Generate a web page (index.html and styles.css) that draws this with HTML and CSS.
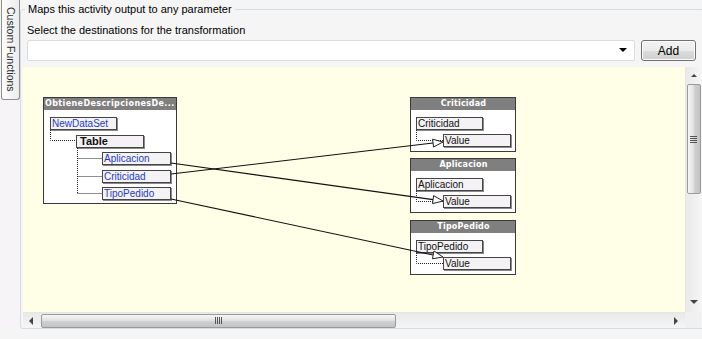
FILE: index.html
```html
<!DOCTYPE html>
<html lang="en">
<head>
    <meta charset="UTF-8">
    <title>Transformation mapping</title>
    <link rel="stylesheet" href="styles.css">
</head>
<body>
    <div class="window">
        <!-- Collapsed side panel -->
        <aside class="side">
            <div class="side-tab">Custom Functions</div>
        </aside>

        <fieldset class="mapping">
            <legend>Maps this activity output to any parameter</legend>
            <div class="dest-label">Select the destinations for the transformation</div>
            <div class="dest-row">
                <div class="combo"><span class="combo-arrow"></span></div>
                <button class="btn-add" type="button">Add</button>
            </div>

            <div class="viewer">
                <div class="canvas">
                    <!-- Source schema -->
                    <div class="node node-source">
                        <div class="node-title">ObtieneDescripcionesDe...</div>
                        <div class="node-body">
                            <div class="item lvl-0">NewDataSet</div>
                            <div class="item lvl-1 item-table">Table</div>
                            <div class="item lvl-2">Aplicacion</div>
                            <div class="item lvl-2">Criticidad</div>
                            <div class="item lvl-2">TipoPedido</div>
                        </div>
                    </div>

                    <!-- Destinations -->
                    <div class="node node-dest dest-1">
                        <div class="node-title center">Criticidad</div>
                        <div class="node-body">
                            <div class="item lvl-0 item-dest">Criticidad</div>
                            <div class="item lvl-1 item-dest">Value</div>
                        </div>
                    </div>
                    <div class="node node-dest dest-2">
                        <div class="node-title center">Aplicacion</div>
                        <div class="node-body">
                            <div class="item lvl-0 item-dest">Aplicacion</div>
                            <div class="item lvl-1 item-dest">Value</div>
                        </div>
                    </div>
                    <div class="node node-dest dest-3">
                        <div class="node-title center">TipoPedido</div>
                        <div class="node-body">
                            <div class="item lvl-0 item-dest">TipoPedido</div>
                            <div class="item lvl-1 item-dest">Value</div>
                        </div>
                    </div>

                    <!-- Tree connectors and mappings -->
                    <svg class="links" width="662" height="245" viewBox="23 67 662 245">
                        <g class="tree">
                            <path d="M50.5 130 V140.5 H76"/>
                            <path d="M77.5 148 V193.5 M77.5 158.5 H102 M77.5 176.5 H102 M77.5 193.5 H102"/>
                            <path d="M416.5 130 V140.5 H443"/>
                            <path d="M416.5 191 V201.5 H443"/>
                            <path d="M416.5 253 V263.5 H443"/>
                        </g>
                        <g class="map">
                            <line x1="171" y1="174" x2="433" y2="143"/>
                            <polygon points="443,142 433.5,147 432.6,139.2"/>
                            <line x1="171" y1="163" x2="433" y2="199.6"/>
                            <polygon points="443,201 432.5,203.6 433.6,195.6"/>
                            <line x1="171" y1="199" x2="433" y2="255"/>
                            <polygon points="443,257 432.4,258.8 434,251"/>
                        </g>
                    </svg>
                </div>

                <div class="vscroll">
                    <span class="arrow arrow-up"></span>
                    <div class="vthumb"><span class="grip-h"></span></div>
                    <span class="arrow arrow-down"></span>
                </div>
                <div class="hscroll">
                    <span class="arrow arrow-left"></span>
                    <div class="hthumb"><span class="grip-v"></span></div>
                    <span class="arrow arrow-right"></span>
                </div>
                <div class="corner"></div>
            </div>
        </fieldset>
    </div>
</body>
</html>
```

FILE: styles.css
```css
* {
    box-sizing: border-box;
}

html, body {
    margin: 0;
    padding: 0;
}

body {
    background-color: #f5f5f5;
    font-family: "Liberation Sans", Arial, sans-serif;
    font-size: 11px;
    color: #000;
    overflow: hidden;
}

.window {
    display: flex;
    align-items: flex-start;
    width: 704px;
    height: 339px;
}

/* Side panel */
.side {
    width: 20px;
    height: 329px;
    flex-shrink: 0;
    background-color: #f7f4f8;
}

.side-tab {
    width: 19px;
    height: 101px;
    margin: -1px 0 0 1px;
    padding-top: 8px;
    border: 1px solid #8e8f8f;
    border-top: none;
    border-radius: 0 0 3px 3px;
    background: linear-gradient(to right, #fdfdfd, #ececec);
    writing-mode: vertical-rl;
    line-height: 17px;
    font-size: 10.5px;
    color: #2b2b2b;
}

/* Group box */
.mapping {
    width: 684px;
    min-width: 0;
    margin: 2px 0 0 0;
    padding: 7px 2px 0 2px;
    border: 1px solid #d3dde5;
    border-radius: 3px;
}

.mapping legend {
    margin-left: 2px;
    padding: 0 3px;
    line-height: 14px;
    color: #000;
}

.dest-label {
    margin-left: 4px;
    line-height: 14px;
}

.dest-row {
    display: flex;
    gap: 6px;
    margin: 3px 0 6px 4px;
}

.combo {
    position: relative;
    width: 608px;
    height: 21px;
    background-color: #fff;
    border: 1px solid #dcdcdc;
    border-radius: 2px;
}

.combo-arrow {
    position: absolute;
    right: 7px;
    top: 7px;
    border-left: 4px solid transparent;
    border-right: 4px solid transparent;
    border-top: 4px solid #000;
}

.btn-add {
    width: 55px;
    height: 21px;
    padding: 0;
    font-family: inherit;
    font-size: 12px;
    color: #000;
    border: 1px solid #707070;
    border-radius: 3px;
    background: linear-gradient(#f3f3f3 0%, #ebebeb 50%, #dddddd 50%, #cfcfcf 100%);
    box-shadow: inset 0 0 0 1px #fcfcfc;
}

/* Designer surface */
.viewer {
    display: grid;
    grid-template-columns: 662px 16px;
    grid-template-rows: 245px 16px;
}

.canvas {
    position: relative;
    overflow: hidden;
    background-color: #ffffe8;
}

.node {
    position: absolute;
    background-color: #fff;
    border: 1px solid #3a3a3a;
}

.node-source {
    left: 20px;
    top: 30px;
    width: 134px;
    height: 107px;
}

.node-dest {
    left: 387px;
    width: 106px;
    height: 55px;
}

.dest-1 { top: 30px; }
.dest-2 { top: 91px; }
.dest-3 { top: 153px; }

.node-title {
    height: 12px;
    padding-left: 1px;
    background-color: #7f7f7f;
    color: #fff;
    font-family: "DejaVu Sans", Verdana, sans-serif;
    font-size: 8px;
    font-weight: bold;
    letter-spacing: 0.4px;
    line-height: 11px;
    white-space: nowrap;
    overflow: hidden;
}

.node-title.center {
    text-align: center;
    letter-spacing: 0.2px;
}

.node-body {
    display: flex;
    flex-direction: column;
    align-items: flex-start;
    gap: 4.5px;
    padding-top: 7px;
}

.node-dest .node-body {
    gap: 4px;
}

.item {
    height: 13px;
    padding-left: 1px;
    border: 1px solid #444;
    box-shadow: 1px 1px 0 #8a8a8a;
    background-color: #f5f2f6;
    font-size: 10px;
    line-height: 11px;
    color: #1f3cc0;
    white-space: nowrap;
}

.node-source .lvl-0 { margin-left: 6px; width: 67px; }
.node-source .lvl-1 { margin-left: 32px; width: 68px; }
.node-source .lvl-2 { margin-left: 58px; width: 69px; }

.node-dest .lvl-0 { margin-left: 5px; width: 67px; }
.node-dest .lvl-1 { margin-left: 32px; width: 68px; }

.item-table {
    font-weight: bold;
    font-size: 11px;
    color: #111;
    padding-left: 3px;
}

.item-dest {
    color: #111;
}

.links {
    position: absolute;
    left: 0;
    top: 0;
}

.links .tree path {
    fill: none;
    stroke: #222;
    stroke-width: 1;
    stroke-dasharray: 1 1;
}

.links .map line {
    stroke: #111;
    stroke-width: 1.1;
}

.links .map polygon {
    fill: #fff;
    stroke: #222;
    stroke-width: 1;
}

/* Scrollbars */
.vscroll,
.hscroll,
.corner {
    position: relative;
    background-color: #f0f0f0;
}

.vscroll {
    display: flex;
    flex-direction: column;
    align-items: center;
    border-left: 1px solid #e6e6e6;
    background: linear-gradient(to right, #e9e9e9, #f5f5f5);
}

.hscroll {
    display: flex;
    align-items: center;
    border-top: 1px solid #e6e6e6;
    background: linear-gradient(#e9e9e9, #f5f5f5);
}

.arrow {
    display: block;
    width: 0;
    height: 0;
}

.arrow-up {
    margin-top: 7px;
    border-left: 3px solid transparent;
    border-right: 3px solid transparent;
    border-bottom: 3px solid #444;
}

.arrow-down {
    margin-top: auto;
    margin-bottom: 8px;
    border-left: 4px solid transparent;
    border-right: 4px solid transparent;
    border-top: 4px solid #444;
}

.arrow-left {
    margin-left: 6px;
    border-top: 4px solid transparent;
    border-bottom: 4px solid transparent;
    border-right: 4px solid #444;
}

.arrow-right {
    margin-left: auto;
    margin-right: 7px;
    border-top: 4px solid transparent;
    border-bottom: 4px solid transparent;
    border-left: 4px solid #444;
}

.vthumb {
    display: flex;
    align-items: center;
    justify-content: center;
    width: 14px;
    height: 110px;
    margin-top: 7px;
    border: 1px solid #9a9a9a;
    border-radius: 2px;
    background: linear-gradient(to right, #f6f6f6, #e2e2e2 45%, #cfcfcf 55%, #c4c4c4);
}

.hthumb {
    display: flex;
    align-items: center;
    justify-content: center;
    width: 355px;
    height: 14px;
    margin-left: 8px;
    border: 1px solid #9a9a9a;
    border-radius: 2px;
    background: linear-gradient(#f6f6f6, #e2e2e2 45%, #cfcfcf 55%, #c4c4c4);
}

.grip-h {
    width: 7px;
    height: 7px;
    background: repeating-linear-gradient(#555 0 1px, transparent 1px 2px);
}

.grip-v {
    width: 7px;
    height: 7px;
    background: repeating-linear-gradient(to right, #555 0 1px, transparent 1px 2px);
}

.corner {
    background-color: #f0f0f0;
}
```
